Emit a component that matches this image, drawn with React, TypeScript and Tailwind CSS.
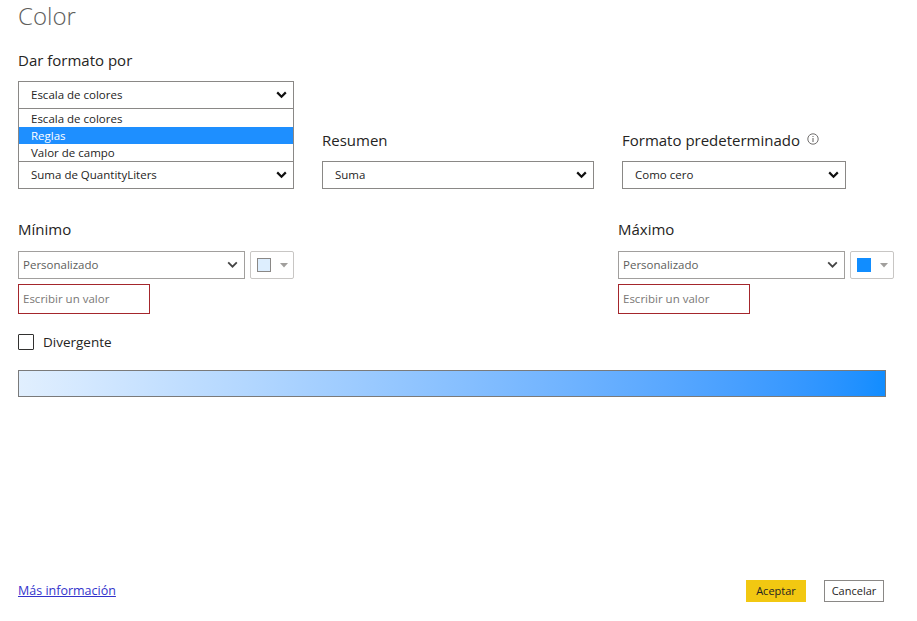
import React from 'react';

const font = { fontFamily: '"Segoe UI", "Open Sans", "Noto Sans", sans-serif' };

const Chevron: React.FC = () => (
  <svg width="11" height="8" viewBox="0 0 11 8" className="shrink-0">
    <path d="M1.2 1.4 L5.5 5.7 L9.8 1.4" fill="none" stroke="#111" strokeWidth="2.2" />
  </svg>
);

const GrayChevron: React.FC = () => (
  <svg width="11" height="8" viewBox="0 0 11 8" className="shrink-0">
    <path d="M1.2 1.4 L5.5 5.7 L9.8 1.4" fill="none" stroke="#444" strokeWidth="1.8" />
  </svg>
);

interface SelectProps {
  value: string;
  className?: string;
}

const Select: React.FC<SelectProps> = ({ value, className = '' }) => (
  <div
    className={`h-[28px] border border-[#8a8886] bg-white flex items-center justify-between pl-[12px] pr-[6px] text-[11.5px] text-[#252423] ${className}`}
  >
    <span>{value}</span>
    <Chevron />
  </div>
);

const Swatch: React.FC<{ color: string; border: string }> = ({ color, border }) => (
  <div className="h-[28px] w-[44px] border border-[#c8c6c4] rounded-[2px] flex items-center pl-[6px] gap-[9px]">
    <div className="w-[14px] h-[14px] border" style={{ backgroundColor: color, borderColor: border }} />
    <svg width="8" height="5" viewBox="0 0 8 5">
      <path d="M0 0 L8 0 L4 4.5 Z" fill="#a19f9d" />
    </svg>
  </div>
);

const RangeInput: React.FC<{ label: string; color: string; border: string }> = ({ label, color, border }) => (
  <div className="w-[276px]">
    <div className="text-[15px] text-[#252423] h-[22px] leading-[22px]">{label}</div>
    <div className="mt-[11px] flex gap-[5px]">
      <div className="w-[228px] h-[28px] border border-[#a19f9d] flex items-center justify-between pl-[4px] pr-[6px] text-[11.5px] text-[#605e5c]">
        <span>Personalizado</span>
        <GrayChevron />
      </div>
      <Swatch color={color} border={border} />
    </div>
    <div className="mt-[5px] w-[132px] h-[30px] border border-[#a4262c] flex items-center pl-[4px] text-[11.5px] text-[#797775]">
      Escribir un valor
    </div>
  </div>
);

const App: React.FC = () => {
  return (
    <div className="w-[917px] h-[621px] bg-white relative overflow-hidden" style={font}>
      <div className="px-[18px] flex flex-col h-full">
        <div className="pt-[2px] text-[24px] font-light text-[#605e5c] leading-[27px]">Color</div>

        <div className="mt-[21px] text-[15px] text-[#252423] leading-[20px]">Dar formato por</div>

        <div className="relative mt-[11px] w-[276px]">
          <Select value="Escala de colores" className="w-[276px]" />
          <div className="absolute left-0 top-[27px] w-[276px] border border-[#8a8886] border-b-0 bg-white z-10 pt-[1px] text-[11.5px] text-[#252423]">
            <div className="h-[17px] leading-[17px] pl-[12px]">Escala de colores</div>
            <div className="h-[17px] leading-[17px] pl-[12px] bg-[#1e8fff] text-white">Reglas</div>
            <div className="h-[17px] leading-[17px] pl-[12px]">Valor de campo</div>
          </div>
        </div>

        <div className="mt-[20px] flex gap-[28px]">
          <div className="w-[276px]">
            <div className="h-[22px]" />
            <Select value="Suma de QuantityLiters" className="mt-[10px] w-[276px]" />
          </div>
          <div className="w-[272px]">
            <div className="text-[15px] text-[#252423] h-[22px] leading-[22px]">Resumen</div>
            <Select value="Suma" className="mt-[10px] w-[272px]" />
          </div>
          <div className="w-[224px]">
            <div className="text-[15px] text-[#252423] h-[22px] leading-[22px] flex items-center gap-[7px]">
              <span>Formato predeterminado</span>
              <svg width="12" height="12" viewBox="0 0 12 12" className="-mt-[2px]">
                <circle cx="6" cy="6" r="5.2" fill="none" stroke="#605e5c" strokeWidth="0.9" />
                <rect x="5.5" y="5" width="1" height="4" fill="#605e5c" />
                <rect x="5.5" y="3" width="1" height="1" fill="#605e5c" />
              </svg>
            </div>
            <Select value="Como cero" className="mt-[10px] w-[224px]" />
          </div>
        </div>

        <div className="mt-[29px] flex justify-between w-[876px]">
          <RangeInput label="Mínimo" color="#ddeefe" border="#8a8886" />
          <RangeInput label="Máximo" color="#118dff" border="#118dff" />
        </div>

        <div className="mt-[18px] flex items-center gap-[9px]">
          <div className="w-[16px] h-[16px] border border-[#323130] rounded-[1px]" />
          <span className="text-[13.5px] text-[#252423]">Divergente</span>
        </div>

        <div className="mt-[18px] w-[868px] h-[27px] border border-[#7a7a7a] bg-gradient-to-r from-[#e1effe] to-[#118dff]" />

        <div className="mt-auto mb-[19px] flex items-center justify-between">
          <a href="#" className="text-[12.5px] text-[#3333cc] underline">Más información</a>
          <div className="flex gap-[18px] mr-[15px]">
            <button className="w-[60px] h-[22px] bg-[#f2c811] text-[11px] text-[#252423]">Aceptar</button>
            <button className="w-[60px] h-[22px] border border-[#8a8886] bg-white text-[11px] text-[#252423]">Cancelar</button>
          </div>
        </div>
      </div>
    </div>
  );
};

export default App;
